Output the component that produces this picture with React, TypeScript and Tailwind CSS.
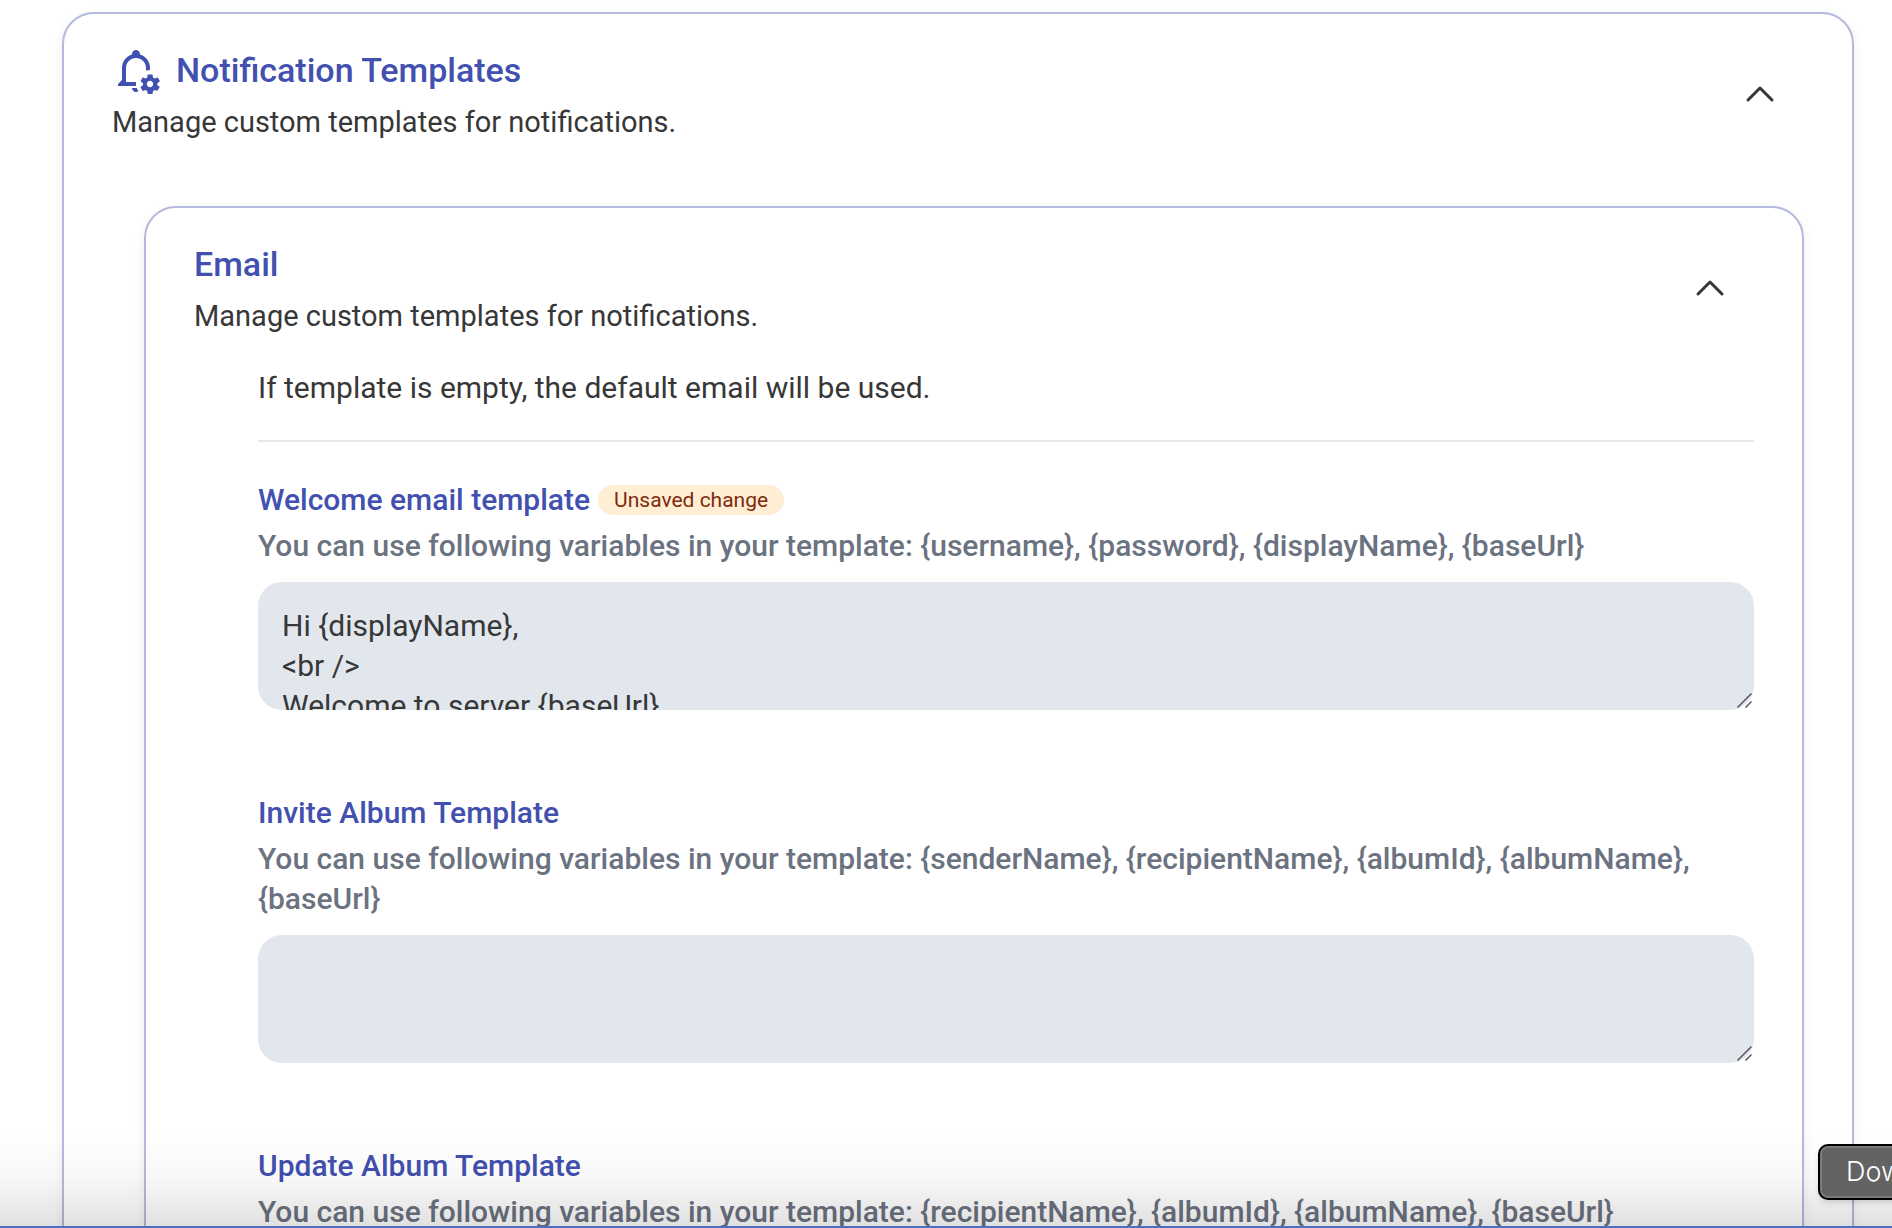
import React, { useId, useState } from "react";

function BellCogIcon() {
  return (
    <svg viewBox="0 0 24 24" className="size-12 shrink-0" fill="currentColor" aria-hidden="true">
      <path d="M12 18H7V11C7 8.2 9.2 6 12 6S17 8.2 17 11V12.3C17.6 12.1 18.3 12 19 12V11C19 7.9 17 5.2 14 4.3V4C14 2.9 13.1 2 12 2S10 2.9 10 4V4.3C7 5.2 5 7.9 5 11V17L3 19V20H12V18M10 21C10 22.1 10.9 23 12 23C12.5 23 12.9 22.8 13.2 22.6C12.9 22.1 12.6 21.6 12.4 21H10Z" />
      <path
        fillRule="evenodd"
        d="M23.8 20.4C23.9 20.4 23.9 20.5 23.8 20.6L22.8 22.3C22.7 22.4 22.6 22.4 22.5 22.4L21.3 22C21 22.2 20.8 22.3 20.5 22.5L20.3 23.8C20.3 23.9 20.2 24 20.1 24H18.1C18 24 17.9 23.9 17.8 23.8L17.6 22.5C17.3 22.4 17 22.2 16.8 22L15.6 22.5C15.5 22.5 15.4 22.5 15.3 22.4L14.3 20.7C14.2 20.6 14.3 20.5 14.4 20.4L15.5 19.6V18.6L14.4 17.8C14.3 17.7 14.3 17.6 14.3 17.5L15.3 15.8C15.4 15.7 15.5 15.7 15.6 15.7L16.8 16.2C17.1 16 17.3 15.9 17.6 15.7L17.8 14.4C17.8 14.3 17.9 14.2 18.1 14.2H20.1C20.2 14.2 20.3 14.3 20.3 14.4L20.5 15.7C20.8 15.8 21.1 16 21.4 16.2L22.6 15.7C22.7 15.7 22.9 15.7 22.9 15.8L23.9 17.5C24 17.6 23.9 17.7 23.8 17.8L22.7 18.6V19.6L23.8 20.4M20.6 19C20.6 18.1 19.9 17.4 19 17.4S17.4 18.1 17.4 19 18.1 20.6 19 20.6 20.6 19.9 20.6 19Z"
      />
    </svg>
  );
}

function ChevronUpIcon() {
  return (
    <svg
      viewBox="0 0 24 24"
      className="size-12"
      fill="none"
      stroke="currentColor"
      strokeWidth="1.5"
      strokeLinecap="round"
      strokeLinejoin="round"
      aria-hidden="true"
    >
      <path d="m6 15 6-6 6 6" />
    </svg>
  );
}

type AccordionProps = {
  title: string;
  subtitle: string;
  icon?: React.ReactNode;
  children: React.ReactNode;
};

function Accordion({ title, subtitle, icon, children }: AccordionProps) {
  const [open, setOpen] = useState(true);
  return (
    <section className="rounded-4xl border-2 border-[#b4b9df] bg-white px-12 pt-8 shadow-[0_4px_12px_rgba(0,0,0,0.07)]">
      <div className="flex items-center justify-between">
        <div>
          <div className="flex h-12 items-center gap-4 text-[#4250af]">
            {icon}
            <h2 className="text-[34px] leading-12 font-medium">{title}</h2>
          </div>
          <p className="mt-2 text-[29px] leading-10">{subtitle}</p>
        </div>
        <button
          type="button"
          aria-expanded={open}
          aria-label={title}
          onClick={() => setOpen(!open)}
          className="mr-5 rounded-full"
        >
          <ChevronUpIcon />
        </button>
      </div>
      {open && children}
    </section>
  );
}

type FieldProps = {
  label: string;
  description: string;
  initial?: string;
  edited?: boolean;
};

function TemplateField({ label, description, initial = "", edited = false }: FieldProps) {
  const id = useId();
  return (
    <div className="mb-[83px]">
      <div className="flex items-center gap-2">
        <label htmlFor={id} className="font-medium text-[#4250af]">
          {label}
        </label>
        {edited && (
          <span className="rounded-full bg-orange-100 px-4 text-[21px] leading-[30px] text-orange-900">
            Unsaved change
          </span>
        )}
      </div>
      <p id={`${id}-desc`} className="mt-1.5 mb-4 font-medium text-[#6b7280]">
        {description}
      </p>
      <div className="relative">
        <textarea
          id={id}
          aria-describedby={`${id}-desc`}
          defaultValue={initial}
          className="block h-32 w-full resize-none overflow-hidden rounded-3xl bg-[#e2e7ee] p-6 outline-none"
        />
        <svg
          viewBox="0 0 16 16"
          className="absolute right-0.5 bottom-0.5 size-4"
          fill="none"
          stroke="#55565a"
          strokeWidth="1.5"
          aria-hidden="true"
        >
          <path d="M1.5 15.5 15.5 1.5M9.5 15.5l6-6" />
        </svg>
      </div>
    </div>
  );
}

export default function App() {
  return (
    <div className="relative h-screen overflow-hidden bg-white font-['Roboto','Overpass',sans-serif] text-[30px] leading-10 text-[#373737]">
      <main className="pt-3 pr-[38px] pl-[62px]">
        <Accordion
          title="Notification Templates"
          subtitle="Manage custom templates for notifications."
          icon={<BellCogIcon />}
        >
          <div className="mt-16 ml-8">
            <Accordion title="Email" subtitle="Manage custom templates for notifications.">
              <div className="mt-8 ml-16">
                <p>If template is empty, the default email will be used.</p>
                <hr className="mt-8 mb-[38px] border-t-2 border-gray-200" />
                <TemplateField
                  label="Welcome email template"
                  description="You can use following variables in your template: {username}, {password}, {displayName}, {baseUrl}"
                  initial={"Hi {displayName},\n<br />\nWelcome to server {baseUrl}"}
                  edited
                />
                <TemplateField
                  label="Invite Album Template"
                  description="You can use following variables in your template: {senderName}, {recipientName}, {albumId}, {albumName}, {baseUrl}"
                />
                <TemplateField
                  label="Update Album Template"
                  description="You can use following variables in your template: {recipientName}, {albumId}, {albumName}, {baseUrl}"
                />
              </div>
            </Accordion>
          </div>
        </Accordion>
      </main>

      <div className="pointer-events-none absolute inset-x-0 bottom-0 h-24 border-b-2 border-[#4b6fbf] bg-linear-to-b from-transparent via-black/3 to-black/12" />

      <div
        role="tooltip"
        className="absolute bottom-7 left-[calc(100%-74px)] rounded-[10px] border-2 border-black bg-[#7b7b7b] p-0.5 shadow-md"
      >
        <div className="rounded-md bg-[#636363] px-6 py-1.5 font-['Inter',sans-serif] text-[27px] leading-9 font-light text-white">
          Download
        </div>
      </div>
    </div>
  );
}
